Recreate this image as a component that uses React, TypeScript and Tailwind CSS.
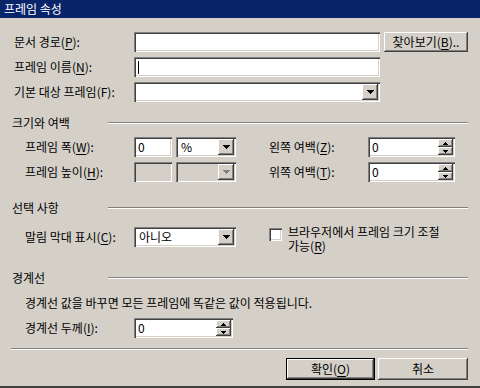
import React from "react";

const sunken =
  "shadow-[inset_1px_1px_0_#808080,inset_2px_2px_0_#404040,inset_-1px_-1px_0_#ffffff,inset_-2px_-2px_0_#d4d0c8]";
const raised =
  "bg-[#d4d0c8] shadow-[inset_-1px_-1px_0_#404040,inset_1px_1px_0_#ffffff,inset_-2px_-2px_0_#808080,inset_2px_2px_0_#d4d0c8]";

function U({ children }: { children: React.ReactNode }) {
  return <span className="underline underline-offset-2">{children}</span>;
}

function DownArrow({ disabled }: { disabled?: boolean }) {
  return (
    <svg width="7" height="4" shapeRendering="crispEdges">
      <path
        d="M0 0h7v1H0zM1 1h5v1H1zM2 2h3v1H2zM3 3h1v1H3z"
        fill={disabled ? "#808080" : "#000"}
      />
    </svg>
  );
}

function TinyArrow({ up }: { up?: boolean }) {
  return (
    <svg width="5" height="3" shapeRendering="crispEdges">
      <path
        d={up ? "M2 0h1v1H2zM1 1h3v1H1zM0 2h5v1H0z" : "M0 0h5v1H0zM1 1h3v1H1zM2 2h1v1H2z"}
        fill="#000"
      />
    </svg>
  );
}

function TextBox({
  className,
  value,
  caret,
  disabled,
}: {
  className: string;
  value?: string;
  caret?: boolean;
  disabled?: boolean;
}) {
  return (
    <div
      className={`${sunken} ${disabled ? "bg-[#d4d0c8]" : "bg-white"} ${className} flex items-center pl-[4px]`}
    >
      {caret && <div className="w-px h-[13px] bg-black" />}
      {value && <span className="leading-[14px]">{value}</span>}
    </div>
  );
}

function Combo({
  className,
  value,
  disabled,
}: {
  className: string;
  value?: string;
  disabled?: boolean;
}) {
  return (
    <div
      className={`${sunken} ${disabled ? "bg-[#d4d0c8]" : "bg-white"} ${className} flex items-stretch p-[2px]`}
    >
      <div className="flex-1 flex items-center pl-[3px] leading-[14px]">{value}</div>
      <div className={`${raised} w-[16px] flex items-center justify-center`}>
        <DownArrow disabled={disabled} />
      </div>
    </div>
  );
}

function Spin({ className, value }: { className: string; value: string }) {
  return (
    <div className={`${sunken} bg-white ${className} flex items-stretch p-[2px]`}>
      <div className="flex-1 flex items-center pl-[2px] leading-[14px]">{value}</div>
      <div className="w-[15px] flex flex-col">
        <div className={`${raised} flex-1 flex items-center justify-center`}>
          <TinyArrow up />
        </div>
        <div className={`${raised} flex-1 flex items-center justify-center`}>
          <TinyArrow />
        </div>
      </div>
    </div>
  );
}

function Etched({ className = "" }: { className?: string }) {
  return <div className={`h-[2px] border-t border-t-[#808080] border-b border-b-white ${className}`} />;
}

function Section({ title }: { title: string }) {
  return (
    <div className="flex items-center h-[12px]">
      <div className="w-[96px] leading-[14px]">{title}</div>
      <Etched className="flex-1" />
    </div>
  );
}

function Button({ children, primary }: { children: React.ReactNode; primary?: boolean }) {
  return (
    <div className={`h-[22px] ${primary ? "w-[89px] border border-black" : "w-[90px]"}`}>
      <div className={`${raised} h-full flex items-center justify-center leading-[14px]`}>
        {children}
      </div>
    </div>
  );
}

export default function App() {
  return (
    <div className="w-[480px] h-[388px] bg-[#d4d0c8] flex flex-col text-[12px] text-black font-['Noto_Sans_CJK_KR',sans-serif] border-b-2 border-b-[#404040]">
      <div className="h-[18px] bg-[#0a246a] text-white pl-[4px] flex items-center text-[12px]">
        프레임 속성
      </div>

      <div className="pl-[12px] pr-[12px] flex flex-col">
        <div className="mt-[14px] flex items-center h-5">
          <div className="w-[122px] pl-[2px]">
            문서 경로(<U>P</U>):
          </div>
          <TextBox className="w-[246px] h-5" />
          <div className={`${raised} ml-[4px] w-[84px] h-5 flex items-center justify-center leading-[14px]`}>
            찾아보기(<U>B</U>)..
          </div>
        </div>

        <div className="mt-[5px] flex items-center h-5">
          <div className="w-[122px] pl-[2px]">
            프레임 이름(<U>N</U>):
          </div>
          <TextBox className="w-[246px] h-5" caret />
        </div>

        <div className="mt-[5px] flex items-center h-5">
          <div className="w-[122px] pl-[2px]">기본 대상 프레임(F):</div>
          <Combo className="w-[246px] h-5" />
        </div>

        <div className="mt-[15px]">
          <Section title="크기와 여백" />
        </div>

        <div className="mt-[8px] flex items-center h-5">
          <div className="w-[122px] pl-[13px]">
            프레임 폭(<U>W</U>):
          </div>
          <TextBox className="w-[38px] h-5" value="0" />
          <Combo className="ml-[4px] w-[60px] h-5" value="%" />
          <div className="ml-[33px] w-[99px]">
            왼쪽 여백(<U>Z</U>):
          </div>
          <Spin className="w-[87px] h-5" value="0" />
        </div>

        <div className="mt-[5px] flex items-center h-5">
          <div className="w-[122px] pl-[13px]">
            프레임 높이(<U>H</U>):
          </div>
          <TextBox className="w-[38px] h-5" disabled />
          <Combo className="ml-[4px] w-[60px] h-5" disabled />
          <div className="ml-[33px] w-[99px]">
            위쪽 여백(<U>T</U>):
          </div>
          <Spin className="w-[87px] h-5" value="0" />
        </div>

        <div className="mt-[20px]">
          <Section title="선택 사항" />
        </div>

        <div className="mt-[13px] flex items-start">
          <div className="w-[122px] pl-[13px] h-5 flex items-center">
            말림 막대 표시(<U>C</U>):
          </div>
          <Combo className="w-[102px] h-5" value="아니오" />
          <div className="ml-[33px] mt-[1px] w-[13px] h-[13px] bg-white shadow-[inset_1px_1px_0_#808080,inset_2px_2px_0_#404040,inset_-1px_-1px_0_#ffffff,inset_-2px_-2px_0_#d4d0c8]" />
          <div className="ml-[6px] -mt-[2px] flex flex-col">
            <div className="h-[14px] leading-[14px]">브라우저에서 프레임 크기 조절</div>
            <div className="h-[14px] leading-[14px]">
              가능(<U>R</U>)
            </div>
          </div>
        </div>

        <div className="mt-[19px]">
          <Section title="경계선" />
        </div>

        <div className="mt-[12px] pl-[13px] h-[14px] leading-[14px]">
          경계선 값을 바꾸면 모든 프레임에 똑같은 값이 적용됩니다.
        </div>

        <div className="mt-[8px] flex items-center h-5">
          <div className="w-[122px] pl-[13px]">
            경계선 두께(<U>I</U>):
          </div>
          <Spin className="w-[99px] h-5" value="0" />
        </div>

        <Etched className="mt-[10px] -ml-[1px]" />

        <div className="mt-[8px] flex justify-end gap-[3px]">
          <Button primary>
            확인(<U>O</U>)
          </Button>
          <Button>취소</Button>
        </div>
      </div>
    </div>
  );
}
